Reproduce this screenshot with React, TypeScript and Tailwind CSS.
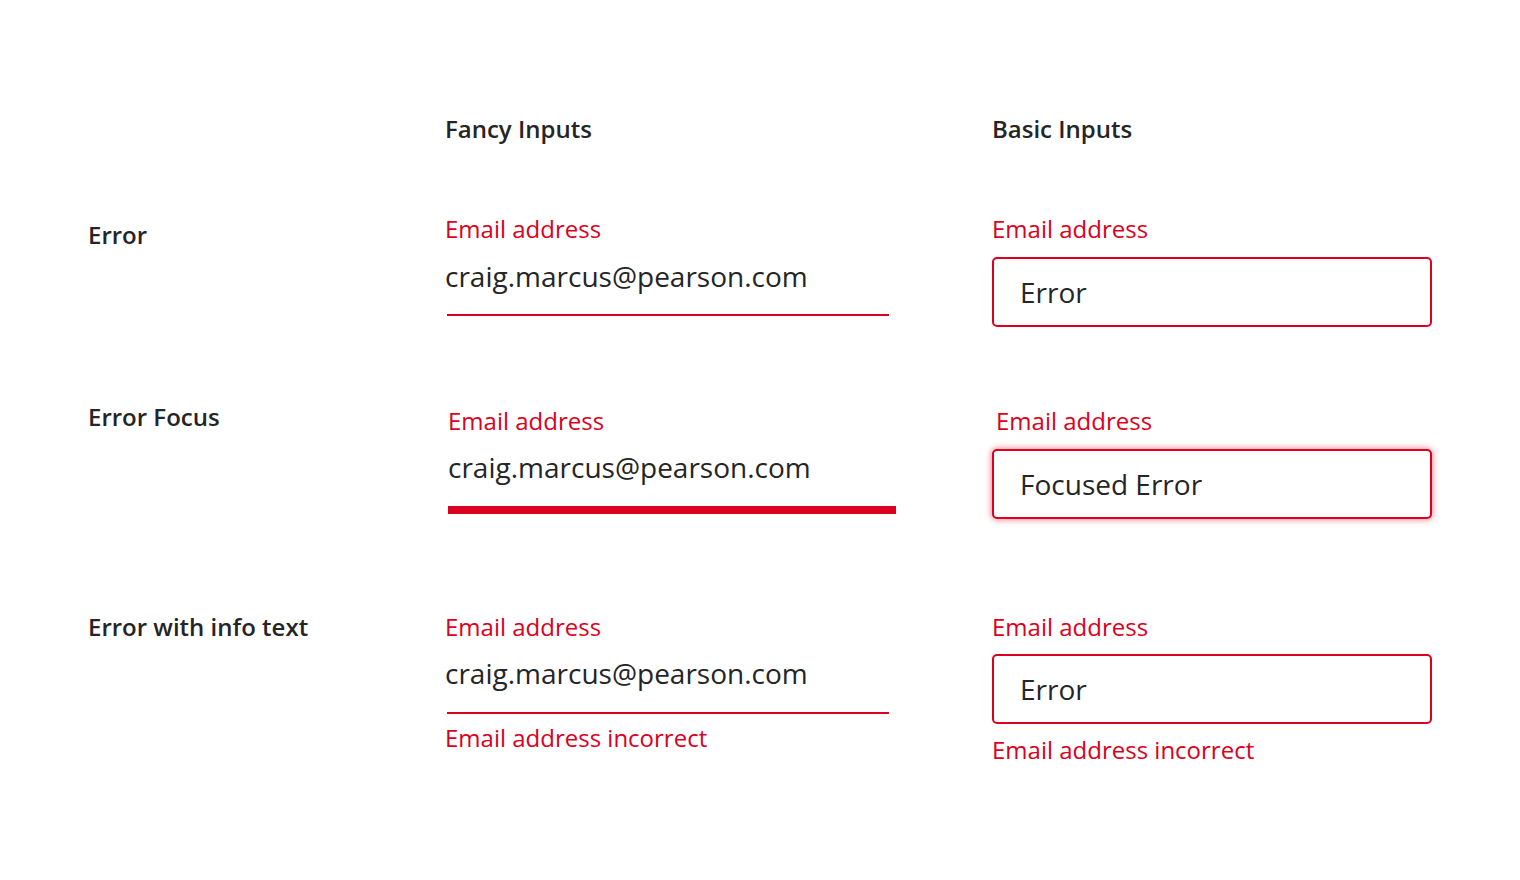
import React from 'react';

const RED = 'text-[#db0020]';

const RowLabel = ({ text, className = '' }: { text: string; className?: string }) => (
  <div className={`w-[357px] shrink-0 text-[24px] leading-[32px] font-semibold text-[#252525] ${className}`}>
    {text}
  </div>
);

interface FancyProps {
  focused?: boolean;
  hint?: string;
}

// underline style input
const FancyInput = ({ focused, hint }: FancyProps) => (
  <div className={`w-[547px] shrink-0 ${focused ? 'pl-[3px] pt-[4px]' : ''}`}>
    <div className={`text-[24px] leading-[32px] ${RED}`}>Email address</div>
    <div className={`text-[28px] leading-[38px] text-[#252525] ${focused || hint ? 'mt-[11px]' : 'mt-[12px]'}`}>
      craig.marcus@pearson.com
    </div>
    {focused ? (
      <div className="mt-[20px] h-[8px] w-[448px] bg-[#db0020]" />
    ) : (
      <div className={`${hint ? 'mt-[20px]' : 'mt-[19px]'} ml-[2px] h-[2px] w-[442px] bg-[#db0020]`} />
    )}
    {hint && <div className={`mt-[8px] text-[24px] leading-[32px] ${RED}`}>{hint}</div>}
  </div>
);

interface BasicProps {
  value: string;
  focused?: boolean;
  hint?: string;
}

const BasicInput = ({ value, focused, hint }: BasicProps) => (
  <div className="w-[440px] shrink-0">
    <div className={`text-[24px] leading-[32px] ${RED} ${focused ? 'ml-[4px] mt-[4px]' : ''}`}>Email address</div>
    <div
      className={`flex h-[70px] w-[440px] items-center rounded-[5px] border-2 border-[#db0020] bg-white pl-[26px] text-[28px] leading-[38px] text-[#252525] ${
        focused ? 'mt-[12px] shadow-[0_0_6px_1px_rgba(219,0,32,0.45)]' : hint ? 'mt-[11px]' : 'mt-[12px]'
      }`}
    >
      {value}
    </div>
    {hint && <div className={`mt-[10px] text-[24px] leading-[32px] ${RED}`}>{hint}</div>}
  </div>
);

export default function App() {
  return (
    <div className="min-h-[880px] w-[1520px] bg-white pl-[88px] pt-[113px] font-['Open_Sans','Noto_Sans',sans-serif]">
      {/* column headers */}
      <div className="flex">
        <div className="w-[357px] shrink-0" />
        <div className="w-[547px] shrink-0 text-[24px] leading-[32px] font-semibold text-[#252525]">Fancy Inputs</div>
        <div className="text-[24px] leading-[32px] font-semibold text-[#252525]">Basic Inputs</div>
      </div>

      {/* Error */}
      <div className="mt-[68px] flex items-start">
        <RowLabel text="Error" className="mt-[6px]" />
        <FancyInput />
        <BasicInput value="Error" />
      </div>

      {/* Error Focus */}
      <div className="mt-[74px] flex items-start">
        <RowLabel text="Error Focus" />
        <FancyInput focused />
        <BasicInput value="Focused Error" focused />
      </div>

      {/* Error with info text */}
      <div className="mt-[91px] flex items-start">
        <RowLabel text="Error with info text" className="mt-[1px]" />
        <div className="mt-[1px]">
          <FancyInput hint="Email address incorrect" />
        </div>
        <div className="mt-[1px]">
          <BasicInput value="Error" hint="Email address incorrect" />
        </div>
      </div>
    </div>
  );
}
